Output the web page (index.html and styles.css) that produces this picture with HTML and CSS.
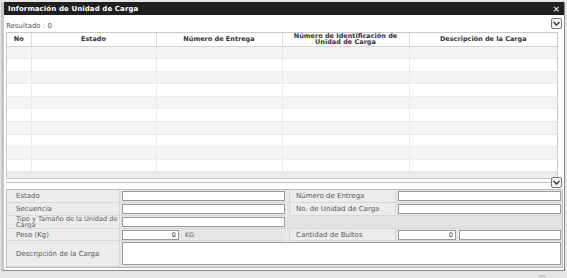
FILE: index.html
```html
<!DOCTYPE html>
<html>
<head>
<meta name="viewport" content="width=device-width, initial-scale=1">
<link rel="stylesheet" href="styles.css">
</head>
<body>
<div class="window">
  <div class="titlebar">
    <span class="title">Información de Unidad de Carga</span>
    <span class="close">&#215;</span>
  </div>
  <div class="content">
    <div class="result-bar">
      <span class="result">Resultado : 0</span>
      <span class="toggle"><svg width="7" height="5" viewBox="0 0 7 5"><path d="M0.5 1 L3.5 4 L6.5 1" fill="none" stroke="#333" stroke-width="1.4"/></svg></span>
    </div>
    <div class="grid">
      <table class="list">
        <thead>
          <tr>
            <th class="c-no">No</th>
            <th class="c-est">Estado</th>
            <th class="c-num">Número de Entrega</th>
            <th class="c-id">Número de Identificación de Unidad de Carga</th>
            <th>Descripción de la Carga</th>
          </tr>
        </thead>
        <tbody>
          <tr><td></td><td></td><td></td><td></td><td></td></tr>
          <tr><td></td><td></td><td></td><td></td><td></td></tr>
          <tr><td></td><td></td><td></td><td></td><td></td></tr>
          <tr><td></td><td></td><td></td><td></td><td></td></tr>
          <tr><td></td><td></td><td></td><td></td><td></td></tr>
          <tr><td></td><td></td><td></td><td></td><td></td></tr>
          <tr><td></td><td></td><td></td><td></td><td></td></tr>
          <tr><td></td><td></td><td></td><td></td><td></td></tr>
          <tr><td></td><td></td><td></td><td></td><td></td></tr>
          <tr><td></td><td></td><td></td><td></td><td></td></tr>
        </tbody>
      </table>
      <div class="hscroll"></div>
    </div>
    <div class="split">
      <span class="toggle"><svg width="7" height="5" viewBox="0 0 7 5"><path d="M0.5 1 L3.5 4 L6.5 1" fill="none" stroke="#333" stroke-width="1.4"/></svg></span>
    </div>
    <div class="detail">
      <div class="lbl">Estado</div>
      <div class="val"><input type="text"></div>
      <div class="lbl lbl-r">Número de Entrega</div>
      <div class="val"><input type="text"></div>

      <div class="lbl">Secuencia</div>
      <div class="val"><input type="text"></div>
      <div class="lbl lbl-r">No. de Unidad de Carga</div>
      <div class="val"><input type="text"></div>

      <div class="lbl lbl-2">Tipo y Tamaño de la Unidad de<br>Carga</div>
      <div class="val"><input type="text"></div>
      <div class="empty"></div>

      <div class="lbl">Peso (Kg)</div>
      <div class="val val-kg"><input type="text" class="num" value="0"><span class="unit">KG</span></div>
      <div class="lbl lbl-r">Cantidad de Bultos</div>
      <div class="val val-pair"><input type="text" class="num" value="0"><input type="text"></div>

      <div class="lbl lbl-desc">Descripción de la Carga</div>
      <div class="val val-desc"><textarea></textarea></div>
    </div>
  </div>
</div>
<div class="footer"><span class="grip"></span></div>
</body>
</html>
```

FILE: styles.css
```css
* {
  box-sizing: border-box;
}

body {
  margin: 0;
  background-color: #e6e6e6;
  font-family: "DejaVu Sans", Verdana, sans-serif;
  font-size: 7px;
  color: #444;
  padding-top: 2px;
}

.window {
  margin: 0 2px 0 1px;
  border: 1px solid #8c8c8c;
  border-top: none;
  border-left: 3px solid #c8c8c8;
  background-color: #fff;
}

.titlebar {
  height: 13px;
  background-color: #1f1f1f;
  color: #fff;
  display: flex;
  align-items: center;
  justify-content: space-between;
  padding: 0 4px 0 4px;
}

.title {
  font-weight: bold;
  font-size: 7px;
  letter-spacing: 0.1px;
}

.close {
  font-size: 9px;
  font-weight: bold;
  color: #ddd;
}

.content {
  padding: 0 1px 2px 2px;
}

.result-bar {
  height: 17px;
  display: flex;
  align-items: center;
  justify-content: space-between;
  padding-right: 1px;
}

.result {
  color: #555;
  padding-top: 4px;
}

.toggle {
  width: 11px;
  height: 11px;
  border: 1px solid #777;
  border-radius: 2px;
  background-color: #f4f4f4;
  display: flex;
  align-items: center;
  justify-content: center;
}

.grid {
  border: 1px solid #c9c9c9;
  margin-right: 5px;
  background-color: #fff;
}

.list {
  width: 100%;
  border-collapse: collapse;
  table-layout: fixed;
}

.list th {
  height: 13px;
  font-weight: bold;
  color: #333;
  font-size: 6.5px;
  line-height: 6px;
  text-align: center;
  border-right: 1px solid #dcdcdc;
  border-bottom: 1px solid #d4d4d4;
  background-color: #fff;
  padding: 0;
}

.list th:last-child,
.list td:last-child {
  border-right: none;
}

.c-no { width: 24px; }
.c-est { width: 125px; }
.c-num { width: 126px; }
.c-id { width: 127px; }

.list td {
  height: 12.6px;
  border-right: 1px solid #eaeaea;
  border-bottom: 1px solid #ececec;
  padding: 0;
}

.list tbody tr:nth-child(odd) td {
  background-color: #f4f4f4;
}

.hscroll {
  height: 6px;
  background-color: #ededed;
  border-top: 1px solid #dedede;
}

.split {
  display: flex;
  justify-content: flex-end;
  border-top: 1px solid #bdbdbd;
  margin-top: 3px;
  height: 7px;
  padding-right: 1px;
}

.split .toggle {
  margin-top: -6px;
}

.detail {
  border: 1px solid #bcbcbc;
  background-color: #e9e9e9;
  display: grid;
  grid-template-columns: 113px 166px 110px 166px;
  grid-template-rows: 13px 13px 13px 12px 13px 13px;
}

.lbl {
  display: flex;
  align-items: center;
  padding-left: 9px;
  color: #5a5a5a;
  background-color: #ececec;
  border-bottom: 1px solid #d8d8d8;
  border-right: 1px solid #d8d8d8;
  white-space: nowrap;
}

.lbl-r {
  margin-left: 3px;
  padding-left: 6px;
  border-left: 1px solid #d8d8d8;
}

.lbl-2 {
  line-height: 6.5px;
  font-size: 6.6px;
  overflow: hidden;
}

.empty {
  grid-column: span 2;
  background-color: #e3e3e3;
  border-bottom: 1px solid #d8d8d8;
}

.val {
  display: flex;
  align-items: center;
  padding: 0 1px 0 2px;
  background-color: #e6e6e6;
  border-bottom: 1px solid #d8d8d8;
}

.val input,
.val textarea {
  width: 100%;
  height: 10px;
  border: 1px solid #9a9a9a;
  border-radius: 0;
  background-color: #fff;
  font-family: "DejaVu Sans", Verdana, sans-serif;
  font-size: 6.5px;
  padding: 0 2px;
  resize: none;
}

.val-kg input {
  width: 57px;
}

.num {
  text-align: right;
  color: #333;
}

.unit {
  margin-left: 6px;
  color: #666;
  font-size: 6.5px;
}

.val-pair .num {
  width: 58px;
  margin-right: 3px;
}

.lbl-desc {
  grid-row: span 2;
}

.val-desc {
  grid-column: span 3;
  grid-row: span 2;
}

.val-desc textarea {
  height: 23px;
}

.footer {
  height: 12px;
  display: flex;
  justify-content: flex-end;
  padding-right: 22px;
  padding-top: 4px;
}

.grip {
  width: 6px;
  height: 2px;
  background-color: #c4c4c4;
}
```
